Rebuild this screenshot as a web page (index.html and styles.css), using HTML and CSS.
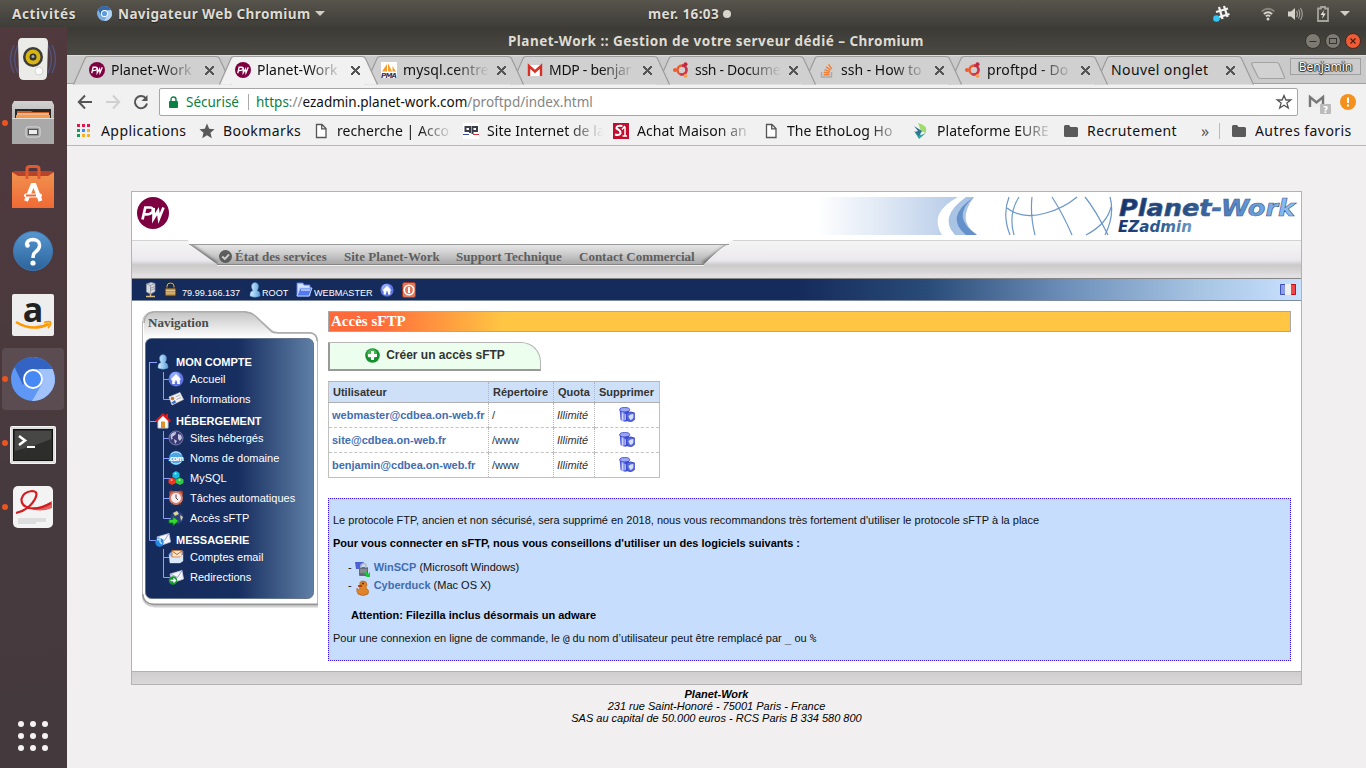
FILE: index.html
```html
<!DOCTYPE html>
<html lang="fr">
<head>
<meta charset="utf-8">
<title>Planet-Work :: Gestion de votre serveur dédié</title>
<link rel="stylesheet" href="styles.css">
</head>
<body>
<svg class="defs" width="0" height="0">
  <defs>
    <linearGradient id="gTitle" x1="0" x2="1"><stop offset="0" stop-color="#17326b"/><stop offset=".4" stop-color="#2d5487"/><stop offset=".7" stop-color="#5d92d2"/><stop offset="1" stop-color="#94c6fb"/></linearGradient>
    <linearGradient id="gEz" x1="0" x2="1"><stop offset="0" stop-color="#17326b"/><stop offset=".6" stop-color="#2f5f93"/><stop offset="1" stop-color="#6a9acb"/></linearGradient>
    <linearGradient id="gFade" x1="0" x2="1"><stop offset="0" stop-color="#fff"/><stop offset=".5" stop-color="#dde7f4"/><stop offset="1" stop-color="#b6cbe8"/></linearGradient>
    <linearGradient id="gNav" x1="0" x2="0" y1="0" y2="1"><stop offset="0" stop-color="#e9e9e9"/><stop offset=".45" stop-color="#cfcfcf"/><stop offset="1" stop-color="#aaa8a9"/></linearGradient>
    <linearGradient id="gMenu" x1="0" x2="1"><stop offset="0" stop-color="#152b5c"/><stop offset=".55" stop-color="#172e60"/><stop offset="1" stop-color="#5f7fa6"/></linearGradient>
    <linearGradient id="gFolder" x1="0" x2="0" y1="0" y2="1"><stop offset="0" stop-color="#c6c6c6"/><stop offset="1" stop-color="#fff"/></linearGradient>
    <linearGradient id="gUser" x1="0" x2="1"><stop offset="0" stop-color="#d9f1ff"/><stop offset="1" stop-color="#5c9fdc"/></linearGradient>
    <linearGradient id="gGrey" x1="0" x2="0" y1="0" y2="1"><stop offset="0" stop-color="#d2d2d2"/><stop offset="1" stop-color="#8d8d8d"/></linearGradient>
    <linearGradient id="gHelp" x1="0" x2="0" y1="0" y2="1"><stop offset="0" stop-color="#5797cf"/><stop offset="1" stop-color="#2c639c"/></linearGradient>
    <linearGradient id="gBag" x1="0" x2="0" y1="0" y2="1"><stop offset="0" stop-color="#f0924f"/><stop offset="1" stop-color="#ef6a35"/></linearGradient>
    <linearGradient id="gBlue" x1="0" x2="1"><stop offset="0" stop-color="#2a34c8"/><stop offset=".3" stop-color="#a6b4ff"/><stop offset=".6" stop-color="#4453e2"/><stop offset="1" stop-color="#2832b4"/></linearGradient>
    <filter id="soft" x="-20%" y="-20%" width="140%" height="140%"><feGaussianBlur stdDeviation="1.500"/></filter>
    <clipPath id="navclip"><path d="M57 4H597Q590 6 572 24H85Z"/></clipPath>
    <symbol id="pw" viewBox="0 0 32 32"><circle cx="16" cy="16" r="16" fill="#7d0041"/><path d="M5.500 22.500L8.300 10.500H13.500Q17 11 15.500 14.500Q14 17.700 8 17.300M16.700 11L16.500 21.500L21 14L22 21.500L26.500 10.500" fill="none" stroke="#fff" stroke-width="2.700"/></symbol>
    <symbol id="ubuntu" viewBox="0 0 16 16"><circle cx="9" cy="8" r="4.500" fill="none" stroke="#f1562a" stroke-width="2.400"/><path d="M9 3.500A4.500 4.500 0 0 1 13.500 8" fill="none" stroke="#c8304f" stroke-width="2.400"/><path d="M13.500 8A4.500 4.500 0 0 1 7 12" fill="none" stroke="#d5344a" stroke-width="2.400"/><circle cx="2" cy="8" r="2" fill="#f15b29"/><circle cx="12.500" cy="2.200" r="2" fill="#c9243d"/><circle cx="12.500" cy="14" r="2" fill="#f6a04d"/></symbol>
    <symbol id="stack" viewBox="0 0 16 16"><path d="M2.500 10V15H12.500V10" fill="none" stroke="#aaa" stroke-width="1.400"/><path d="M4.500 12.800H10.500M4.700 10.300L10.600 11M5.500 7.600L11 9.500M7 4.800L11.700 8M9.500 2.300L12.800 7" stroke="#f47f35" stroke-width="1.400"/></symbol>
    <symbol id="page" viewBox="0 0 16 16"><path d="M3.500 1.500H9L13 5.500V14.500H3.500ZM8.700 1.500V5.800H13" fill="#fff" stroke="#555" stroke-width="1.300"/></symbol>
    <symbol id="folder" viewBox="0 0 16 16"><path d="M1 3.500Q1 2 2.500 2H6L7.500 4H13.500Q15 4 15 5.500V12.500Q15 14 13.500 14H2.500Q1 14 1 12.500Z" fill="#5a5a5a"/></symbol>
    <symbol id="user" viewBox="0 0 16 16"><path d="M3 14Q2.500 9.500 6 8.500Q4 6 4.700 3Q5.500 .5 8 .5Q10.500 .5 11.300 3Q12 6 10 8.500Q13.500 9.500 13 14Q8 16.500 3 14Z" fill="url(#gUser)" stroke="#4b8fc9" stroke-width=".5"/></symbol>
    <symbol id="home" viewBox="0 0 16 16"><circle cx="8" cy="8" r="7.500" fill="#5f74e0"/><circle cx="7" cy="6" r="5" fill="#8fa8f7"/><path d="M2.700 8.500L8 3L13.300 8.500H11.800V13H9.200V9.500H6.800V13H4.200V8.500Z" fill="#fff"/></symbol>
    <symbol id="globe" viewBox="0 0 16 16"><circle cx="8" cy="8" r="7.300" fill="#3b3b74"/><circle cx="8" cy="8" r="7" fill="none" stroke="#7878a8"/><path d="M2.500 5Q5 1.500 8 2L7.500 4.500L4 7L5 9L3 9.500ZM10 4L13 5L14 8L12 11L10 9ZM6 9L9 11L7 14Z" fill="#c4c4e6"/></symbol>
    <symbol id="mail" viewBox="0 0 16 16"><path d="M2 5L14 1.500L15.500 10L4 14Z" fill="#f5f7ff" stroke="#c4c8e4" stroke-width=".8"/><path d="M2 5L9.500 8.500L14 1.500" fill="none" stroke="#9b9cc8" stroke-width="1"/></symbol>
    <symbol id="trash" viewBox="0 0 16 16"><path d="M.7 2.500L1.500 13Q5.500 16 10 13.500V2.500Z" fill="url(#gBlue)"/><ellipse cx="5.700" cy="2.700" rx="5" ry="2.200" fill="#98a8f5" stroke="#353fc0" stroke-width=".8"/><path d="M3.700 6.500V13M6.200 7V13" stroke="#d5dcff" stroke-width="1.100"/><path d="M7 6.500Q11 3.500 15.700 6V12.500Q12.500 16 8.500 14Z" fill="#5567de" stroke="#3844c4" stroke-width=".7"/><path d="M11.500 7.500L14.300 7V10.500Q13.500 12.500 11.500 13Q9.700 11 9.500 9Z" fill="#d6defc"/></symbol>
    <symbol id="go" viewBox="0 0 16 16"><path d="M1 9.500H5V6.500L10.500 11L5 15.500V13H1Z" fill="#35d931" stroke="#0d7d18" stroke-width=".9"/></symbol>
  </defs>
</svg>

<header class="topbar">
  <span class="activities">Activités</span>
  <svg class="ti" width="15" height="15" viewBox="0 0 44 44"><circle cx="22" cy="22" r="22" fill="#78aee4"/><path d="M3 11Q10 0 22 0Q36 1 41 12H22L12 26Z" fill="#3867a8"/><path d="M41 12Q50 30 33 41Q27 44 21 44L31 26L30 14Z" fill="#b1d2f4"/><circle cx="22" cy="22" r="9" fill="#5c9ae3" stroke="#fff" stroke-width="3"/></svg>
  <span class="appname">Navigateur Web Chromium</span>
  <svg class="caret" width="10" height="5"><path d="M0 0H10L5 5Z" fill="#d0cdc4"/></svg>
  <span class="clock">mer. 16:03</span><i class="cdot"></i>
  <div class="tray">
    <svg width="17" height="17" viewBox="0 0 17 17"><path d="M6 2L9.500 14M11 1L14.500 12M3 7L15 3.500M4.500 12.500L16.500 9" stroke="#f2f2f2" stroke-width="2.300"/><circle cx="3.500" cy="13.500" r="3.300" fill="#36c5f0"/></svg>
    <svg class="wifi" width="14" height="14" viewBox="0 0 14 14" fill="none" stroke="#d6d3cb" stroke-width="1.800"><path d="M.7 4.500Q7-1 13.300 4.500" stroke="#87847b"/><path d="M2.800 7Q7 3.500 11.200 7M4.800 9.300Q7 7.500 9.200 9.300"/><circle cx="7" cy="12" r="1.500" fill="#d6d3cb" stroke="none"/></svg>
    <svg class="vol" width="16" height="14" viewBox="0 0 16 14"><path d="M1 4.500H4L8 1V13L4 9.500H1Z" fill="#d6d3cb"/><path d="M9.500 4Q11.500 7 9.500 10M11.500 2.500Q14 7 11.500 11.500M13.500 1Q17 7 13.500 13" fill="none" stroke="#a9a69e" stroke-width="1.100"/></svg>
    <svg class="bat" width="12" height="16" viewBox="0 0 12 16"><path d="M4 1H8V2.500H11V15H1V2.500H4Z" fill="none" stroke="#a6a39b" stroke-width="1.800"/><path d="M7 4L3.500 9H6L5 13L8.800 7.600H6.300Z" fill="#e6e4de"/></svg>
    <svg class="caret2" width="10" height="5"><path d="M0 0H10L5 5Z" fill="#d0cdc4"/></svg>
  </div>
</header>

<div class="desk">
<aside class="dock">
  <div class="app"><svg width="48" height="44" viewBox="0 0 48 44"><path d="M5 8Q-2 22 5 36M9 8Q2 22 9 36M43 8Q50 22 43 36M39 8Q46 22 39 36" fill="none" stroke="#50537a" stroke-width="1.500"/><path d="M13 1H35Q39 1 39 6L38 38Q38 43 33 43H15Q10 43 10 38L9 6Q9 1 13 1Z" fill="#ebebe8"/><circle cx="24" cy="20" r="10" fill="#3c3c3a"/><circle cx="24" cy="20" r="7.500" fill="#d8b514"/><circle cx="24" cy="20" r="3.500" fill="#333"/><circle cx="24" cy="19.500" r="1.500" fill="#aaa"/><circle cx="30" cy="34" r="4" fill="#fafafa" stroke="#d3d3d0"/></svg></div>
  <div class="app run"><svg width="44" height="46" viewBox="0 0 44 46"><path d="M3 1H41L43 5V44H1V5Z" fill="url(#gGrey)"/><path d="M4 9H40V20H4Z" fill="#292725"/><path d="M6 11H20L22 12H38V20H6Z" fill="#cd5c22"/><path d="M5 15H39V20H5Z" fill="#f39a4c"/><path d="M6 14H38" stroke="#ffe4c3" stroke-width="1.300"/><path d="M1 18H43V44H1Z" fill="#aaa9a9"/><path d="M1 18.500H43" stroke="#ddd"/><rect x="15" y="27" width="14" height="10" rx="2" fill="#999" stroke="#ddd"/><rect x="17.500" y="29.500" width="9" height="5" fill="#eee" stroke="#555"/></svg></div>
  <div class="app"><svg width="44" height="44" viewBox="0 0 44 44"><path d="M1 7H43V43H1Z" fill="url(#gBag)"/><path d="M1 7L7 11H37L43 7L40 6H4Z" fill="#b5442a"/><path d="M16 14V4Q16 1.500 19 1.500H25Q28 1.500 28 4V14" fill="none" stroke="#e05a31" stroke-width="3"/><path d="M15 36L21.500 20H23.500L29.500 36" fill="none" stroke="#fff" stroke-width="4"/><rect x="13" y="28.500" width="18" height="4" rx="2" fill="#fff"/><rect x="15" y="29.500" width="10" height="2" fill="#ef6a35"/></svg></div>
  <div class="app"><svg width="42" height="42" viewBox="0 0 42 42"><circle cx="21" cy="21" r="19.500" fill="url(#gHelp)" stroke="#3e78b4"/><path d="M14.500 15Q15 9.500 21 9.500Q28 10 27.500 16Q27 19.500 24 21.500Q21 23.500 21 28" fill="none" stroke="#fff" stroke-width="3.500"/><circle cx="15.500" cy="15.500" r="2.300" fill="#fff"/><circle cx="21" cy="33" r="2.600" fill="#fff"/></svg></div>
  <div class="app"><svg width="42" height="42" viewBox="0 0 42 42"><rect width="42" height="42" rx="2" fill="#eee"/><text x="21" y="27.500" text-anchor="middle" class="amz">a</text><path d="M4 28Q20 38 37 30" fill="none" stroke="#ff9900" stroke-width="2.500"/><path d="M32 28.500Q37 27 38.500 28Q39 31 36 34" fill="none" stroke="#ff9900" stroke-width="1.800"/></svg></div>
  <div class="app run current"><svg width="44" height="44" viewBox="0 0 44 44"><circle cx="22" cy="22" r="22" fill="#5f97f6"/><path d="M3.500 10Q10 0 22 0Q36 1 41.500 12H22L12 28Z" fill="#3364c4"/><path d="M41.500 12Q49 30 33 41Q27 44.500 21 44L31.500 26Q33 18 27 12Z" fill="#a1c2fb"/><circle cx="22" cy="22" r="9" fill="#4688f4" stroke="#fff" stroke-width="2"/></svg></div>
  <div class="app run term"><svg width="46" height="38" viewBox="0 0 46 38"><rect x=".5" y=".5" width="45" height="37" rx="1" fill="#ddd" stroke="#f5f5f3"/><rect x="3.500" y="3.500" width="39" height="31" fill="#2d2e2c" stroke="#111"/><path d="M5 5H41V13Q25 20 5 25Z" fill="#474745"/><path d="M9 10L15 14.500L9 19" fill="none" stroke="#fff" stroke-width="2.600"/><path d="M17 21H25" stroke="#fff" stroke-width="2"/></svg></div>
  <div class="app run"><svg width="42" height="42" viewBox="0 0 42 42"><rect x="1" y="0" width="40" height="42" rx="5" fill="#f3f3f3"/><path d="M40 15V22Q27 27 17 22Q28 23 40 15Z" fill="#e2605f"/><path d="M4 27Q17 24 23 13Q27 5 20 5Q11 6 9.500 13Q9 20 17 22Q27 24 39 17" fill="none" stroke="#d31c20" stroke-width="2.200"/><path d="M6 33H34M6 35H34M6 37H24" stroke="#c7c7c7"/></svg></div>
  <div class="grid"><i></i><i></i><i></i><i></i><i></i><i></i><i></i><i></i><i></i></div>
</aside>

<main class="window">
  <div class="titlebar">
    <span class="wtitle">Planet-Work :: Gestion de votre serveur dédié – Chromium</span>
    <div class="wbtns">
      <svg width="16" height="16"><circle cx="8" cy="8" r="7.500" fill="#7c7a72" stroke="#34332e"/><path d="M4.500 8.500H11.500" stroke="#33322e"/></svg>
      <svg width="16" height="16"><circle cx="8" cy="8" r="7.500" fill="#7c7a72" stroke="#34332e"/><rect x="4.500" y="5.500" width="7" height="5" fill="none" stroke="#33322e"/></svg>
      <svg width="16" height="16"><circle cx="8" cy="8" r="7.500" fill="#ef5b34" stroke="#43281f"/><path d="M5.500 5.500L10.500 10.500M10.500 5.500L5.500 10.500" stroke="#4a2014" stroke-width="1.300"/></svg>
    </div>
  </div>

  <nav class="tabs">
    <div class="tab t1"><svg class="shape" width="160" height="29"><path d="M.5 28.500L12 2.500Q12.700 .5 15 .5H143Q145.500 .5 146.500 2.500L158.500 28.500"/></svg><svg class="fav" width="16" height="16"><use href="#pw"/></svg><span class="tt">Planet-Work</span><b class="x"></b></div>
    <div class="tab t2 on"><svg class="shape" width="160" height="29"><path d="M.5 28.500L12 2.500Q12.700 .5 15 .5H143Q145.500 .5 146.500 2.500L158.500 28.500"/></svg><svg class="fav" width="16" height="16"><use href="#pw"/></svg><span class="tt">Planet-Work</span><b class="x"></b></div>
    <div class="tab t3"><svg class="shape" width="160" height="29"><path d="M.5 28.500L12 2.500Q12.700 .5 15 .5H143Q145.500 .5 146.500 2.500L158.500 28.500"/></svg><svg class="fav" width="16" height="16"><rect width="16" height="16" fill="#fff"/><path d="M1 9.500L6 2V9.500ZM7 9.500V1L11 9.500ZM11.500 9.500V4L15 9.500Z" fill="#f89c2c"/><text x="0" y="16" class="pma" textLength="16">PMA</text></svg><span class="tt">mysql.centre</span><b class="x"></b></div>
    <div class="tab t4"><svg class="shape" width="160" height="29"><path d="M.5 28.500L12 2.500Q12.700 .5 15 .5H143Q145.500 .5 146.500 2.500L158.500 28.500"/></svg><svg class="fav" width="16" height="16"><rect x="1" y="3" width="14" height="11" fill="#fff"/><path d="M2 14V4L8 9.500L14 4V14" fill="none" stroke="#d93025" stroke-width="2.400"/></svg><span class="tt">MDP - benjar</span><b class="x"></b></div>
    <div class="tab t5"><svg class="shape" width="160" height="29"><path d="M.5 28.500L12 2.500Q12.700 .5 15 .5H143Q145.500 .5 146.500 2.500L158.500 28.500"/></svg><svg class="fav" width="16" height="16"><use href="#ubuntu"/></svg><span class="tt">ssh - Docume</span><b class="x"></b></div>
    <div class="tab t6"><svg class="shape" width="160" height="29"><path d="M.5 28.500L12 2.500Q12.700 .5 15 .5H143Q145.500 .5 146.500 2.500L158.500 28.500"/></svg><svg class="fav" width="16" height="16"><use href="#stack"/></svg><span class="tt">ssh - How to</span><b class="x"></b></div>
    <div class="tab t7"><svg class="shape" width="160" height="29"><path d="M.5 28.500L12 2.500Q12.700 .5 15 .5H143Q145.500 .5 146.500 2.500L158.500 28.500"/></svg><svg class="fav" width="16" height="16"><use href="#ubuntu"/></svg><span class="tt">proftpd - Do</span><b class="x"></b></div>
    <div class="tab t8 plain"><svg class="shape" width="160" height="29"><path d="M.5 28.500L12 2.500Q12.700 .5 15 .5H143Q145.500 .5 146.500 2.500L158.500 28.500"/></svg><span class="tt">Nouvel onglet</span><b class="x"></b></div>
    <svg class="newtab" width="36" height="18"><path d="M4 .5H26Q28 .5 29 2L34.500 15Q35 16.500 33 16.500H11Q9 16.500 8 15L1.500 2Q1.500 .5 4 .5Z" fill="#d2d2d2" stroke="#a3a3a3" stroke-width="1.200"/></svg>
    <span class="profile">Benjamin</span>
  </nav>

  <div class="toolbar">
    <svg width="16" height="16" fill="none" stroke="#555" stroke-width="2"><path d="M15 8H2.500M8 1.500L1.800 8L8 14.500"/></svg>
    <svg width="16" height="16" fill="none" stroke="#d0d0d0" stroke-width="2"><path d="M1 8H13.500M8 1.500L14.200 8L8 14.500"/></svg>
    <svg width="16" height="16" fill="none" stroke="#555" stroke-width="2"><path d="M13 4.500A6.100 6.100 0 1 0 14 9.500"/><path d="M14.500 1V7H8.500Z" fill="#555" stroke="none"/></svg>
    <div class="url">
      <svg width="9" height="12"><rect y="5" width="9" height="7" rx="1" fill="#0b8043"/><path d="M2 5V3.500Q2 1 4.500 1T7 3.500V5" fill="none" stroke="#0b8043" stroke-width="1.400"/></svg>
      <span class="secure">Sécurisé</span><i class="sep"></i>
      <span class="addr"><span class="g">https</span><span class="m">://</span>ezadmin.planet-work.com<span class="m">/proftpd/index.html</span></span>
      <svg class="star" width="16" height="16"><path d="M8 1.500L9.900 6H14.800L10.900 9.100L12.300 14L8 11.200L3.700 14L5.100 9.100L1.200 6H6.100Z" fill="none" stroke="#555" stroke-width="1.300"/></svg>
    </div>
    <svg class="gm" width="24" height="22"><rect x="1" y="3" width="15" height="11" fill="#eee"/><path d="M2 14V4L8.500 9.500L15 4V14" fill="none" stroke="#777" stroke-width="2.400"/><rect x="12" y="11" width="11" height="10" rx="1" fill="#bbb"/><text x="17.500" y="19.500" class="q" text-anchor="middle">?</text></svg>
    <svg class="warn" width="16" height="16"><circle cx="8" cy="8" r="8" fill="#f4911e"/><path d="M8 3.500V9M8 10.500V12.500" stroke="#fff" stroke-width="2"/></svg>
  </div>

  <div class="bookmarks">
    <div class="bm b1"><svg width="16" height="16"><path d="M1 1h3v3h-3zM6 1h3v3h-3zM11 1h3v3h-3z" fill="#e2184a"/><path d="M1 6h3v3h-3zM1 11h3v3h-3z" fill="#0f9d58"/><path d="M6 6h3v3h-3z" fill="#4285f4"/><path d="M11 6h3v3h-3zM6 11h3v3h-3zM11 11h3v3h-3z" fill="#f9b020"/></svg><span>Applications</span></div>
    <div class="bm b2"><svg width="16" height="16"><path d="M8 .5L10.200 5.700L15.600 6.200L11.500 9.800L12.800 15.200L8 12.300L3.200 15.200L4.500 9.800L.4 6.200L5.800 5.700Z" fill="#5a5a5a"/></svg><span>Bookmarks</span></div>
    <div class="bm b3 fade"><svg width="16" height="16"><use href="#page"/></svg><span>recherche | Acco</span></div>
    <div class="bm b4 fade"><svg width="16" height="16"><rect width="16" height="16" fill="#fff"/><path d="M7 10V4H2.500V8H7M9.500 11V4H14V8H9.500" fill="none" stroke="#3b3f4c" stroke-width="2"/><path d="M0 11.500H6" stroke="#33479c"/><path d="M10 11.500H16" stroke="#d22f3c"/></svg><span>Site Internet de la</span></div>
    <div class="bm b5 fade"><svg width="16" height="16"><rect width="16" height="16" fill="#c10d2e"/><path d="M9.500 3Q3 2 3.500 5.500Q8 7.500 7.500 10.500Q6 13 2 11.500" fill="none" stroke="#fff" stroke-width="2"/><path d="M12 3L9 6.500M12 4V13M9.500 13H14" fill="none" stroke="#fff" stroke-width="1.500"/></svg><span>Achat Maison an</span></div>
    <div class="bm b6 fade"><svg width="16" height="16"><use href="#page"/></svg><span>The EthoLog Ho</span></div>
    <div class="bm b7 fade"><svg width="16" height="16"><path d="M5 0Q15 2 13 10L8 8Z" fill="#9fdc6c"/><path d="M1 8L8 12L13 10L6 16Z" fill="#2ba8a0"/><path d="M1 3L9 8L6 13L2 9L5 8Z" fill="#317393"/></svg><span>Plateforme EURE</span></div>
    <div class="bm b8"><svg width="16" height="16"><use href="#folder"/></svg><span>Recrutement</span></div>
    <span class="more">»</span><i class="bsep"></i>
    <div class="bm b9"><svg width="16" height="16"><use href="#folder"/></svg><span>Autres favoris</span></div>
  </div>

  <div class="viewport">
    <div class="site">
      <div class="brand">
        <svg class="logo" width="32" height="32"><use href="#pw"/></svg>
        <svg class="banner" width="480" height="40">
          <path d="M0 0H142Q112 16 126 38H0Z" fill="url(#gFade)"/>
          <path d="M158 0H150Q122 20 139 38H161Q140 24 158 0Z" fill="#a9c3e4"/>
          <path d="M158 0Q128 20 150 38H161Q134 20 158 0Z" fill="#6591ca"/>
          <g fill="none" stroke="#6c97cb" stroke-width="1.200"><path d="M193 0Q186 18 194 38M203 0Q192 17 198 38M216 0Q214 18 219 38M191 11Q206 23 230 16Q248 11 261 0M236 0Q247 17 256 38M269 0Q279 12 292 38M270 38Q291 27 295 10M294 0Q299 18 289 38"/></g>
          <text x="303" y="19" class="pwt" textLength="176" lengthAdjust="spacingAndGlyphs">Planet-Work</text>
          <text x="302" y="35" class="ezt" textLength="74" lengthAdjust="spacingAndGlyphs">EZadmin</text>
        </svg>
      </div>
      <div class="sitenav">
        <svg class="navbg" width="610" height="38"><path d="M56 0H602Q596 2 592 4.500H58Z" fill="#fff"/><path d="M57 4H597Q590 6 572 24H85Z" fill="url(#gNav)"/><g clip-path="url(#navclip)" filter="url(#soft)" opacity=".8"><path d="M54 4L84 25" stroke="#555" stroke-width="6"/><path d="M600 4L572 25" stroke="#555" stroke-width="6"/></g><path d="M57 4.500H597" stroke="#9a9a9a"/><path d="M85 24.500H572" stroke="#858585"/><path d="M85 25.500H572" stroke="#f0f0f0"/></svg>
        <svg class="ok" width="13" height="13"><circle cx="6.500" cy="6.500" r="6.500" fill="#5c5c5c"/><path d="M3.200 6.500L5.800 9L10 4.500" fill="none" stroke="#ccc" stroke-width="1.900"/></svg>
        <a class="n1">État des services</a><a class="n2">Site Planet-Work</a><a class="n3">Support Technique</a><a>Contact Commercial</a>
      </div>
      <div class="blue">
        <svg width="14" height="16"><path d="M3.500 2L8 .5L12 1.500V9.500L7.500 12L3.500 10Z" fill="#d9dbe2" stroke="#9a9ca6" stroke-width=".7"/><path d="M3.500 2L7.500 3.500V12M7.500 3.500L12 1.500M8 6L12 4.500M8 8L12 6.500" fill="none" stroke="#8d8f99" stroke-width=".8"/><path d="M7.500 12V14.500M3 14.500H12" stroke="#dcba80" stroke-width="1.500"/></svg>
        <svg class="lock" width="13" height="15"><path d="M3 7V4Q3 1 6.500 1T10 4V7" fill="none" stroke="#222" stroke-width="2.600"/><path d="M3 7V4Q3 1 6.500 1T10 4V7" fill="none" stroke="#bbb" stroke-width="1"/><rect x="1" y="6" width="11" height="8" rx="1" fill="#bd9457" stroke="#3b2a12"/><path d="M2 8.500H11M2 11H11" stroke="#e2c58d"/></svg>
        <span class="ip">79.99.166.137</span>
        <svg width="12" height="16" viewBox="2 0 12 16"><use href="#user" width="16" height="16"/></svg><span class="cap root">ROOT</span>
        <svg width="16" height="16"><path d="M1 1H7L8 3H14V14H1Z" fill="#d3e3ff" stroke="#5c7ad8"/><path d="M4 6H16L13 14H1Z" fill="#517af0" stroke="#b8d1ff"/><path d="M5 8H14" stroke="#fff"/></svg><span class="cap web">WEBMASTER</span>
        <svg class="h" width="14" height="16" viewBox="0 0 16 16"><use href="#home"/></svg>
        <svg width="14" height="16"><rect x=".5" y=".5" width="13" height="15" rx="2" fill="#e0795d" stroke="#a33822"/><circle cx="7" cy="8" r="4.700" fill="none" stroke="#fff" stroke-width="1.600"/><path d="M7 5V11" stroke="#fff" stroke-width="2"/></svg>
        <svg class="fr" width="16" height="11"><rect width="16" height="11" fill="#eee"/><rect width="5" height="11" fill="#8b9ee4"/><rect x="11" width="5" height="11" fill="#f04848"/><path d="M.5 10.500V.5H5" fill="none" stroke="#4054b8"/><path d="M.5 10.500H5" stroke="#4054b8"/><path d="M11 .5H15.500V10.500H11" fill="none" stroke="#c81017"/></svg>
      </div>

      <div class="body">
        <aside class="menu">
          <svg class="menubg" width="176" height="300">
            <path d="M1.500 285Q2 294.500 13 295H176" fill="none" stroke="#d0d0d0" stroke-width="3"/>
            <path d="M.5 12Q1 1 12 .5H103Q110 1 114 5L128 18Q131 21.500 136 21.500H168Q175.500 22 175.500 30V293H11Q1 293 .5 283Z" fill="#fff" stroke="#bbb"/>
            <path d="M.7 283Q1.500 293 12 293.500H176" fill="none" stroke="#969696" stroke-width="1.500"/>
            <path d="M2 27V12Q2.500 2 12 1.500H103Q109 2 113 6L130 22V27Z" fill="url(#gFolder)"/>
            <path d="M2 12Q2.500 1.500 12 1H103Q109 1.500 113 5L129 20Q131 22 136 22H168Q175 22.500 175 30" fill="none" stroke="#a9a9a9" stroke-width="1.500"/>
            <rect x="3.500" y="27.500" width="168" height="260" rx="6" fill="url(#gMenu)" stroke="#65758f"/>
            <path d="M7.500 51V229.500M7.500 51.500H15M7.500 110.500H15M7.500 229.500H15M21.500 61V88.500H29M21.500 68.500H29M21.500 120V207.500H29M21.500 127.500H29M21.500 147.500H29M21.500 167.500H29M21.500 187.500H29M21.500 238V266.500H29M21.500 246.500H29" fill="none" stroke="#8d9ffa"/>
          </svg>
          <h2>Navigation</h2>
          <div class="tree">
            <p class="hd"><svg width="16" height="16"><use href="#user"/></svg>MON COMPTE</p>
            <p><svg width="16" height="16"><use href="#home"/></svg>Accueil</p>
            <p><svg width="16" height="16"><path d="M1 6L12 1.500L15.500 8.500L4 14Z" fill="#f5f2f0" stroke="#c5c5cf" stroke-width=".7"/><circle cx="4.500" cy="7.500" r="1.800" fill="#c8752f"/><path d="M3.500 11.500L7 9L8 11.500L5 13Z" fill="#356bbc"/><path d="M7.500 6L12 4M8.500 8.500L13 6.500" stroke="#a3aac4"/></svg>Informations</p>
            <p class="hd"><svg width="16" height="16"><path d="M3 7V15H13V7L8 2Z" fill="#fff" stroke="#c9ccd6"/><path d="M6 15V8.500H10V15Z" fill="#e19028"/><path d="M.8 8.500L8 1.500L15.200 8.500M12 1V5" fill="none" stroke="#e21919" stroke-width="2"/></svg>HÉBERGEMENT</p>
            <p><svg width="16" height="16"><use href="#globe"/></svg>Sites hébergés</p>
            <p><svg width="16" height="16"><circle cx="8" cy="8" r="7" fill="#4fa4e4"/><path d="M3 4Q8 0 13 4M3 12Q8 16 13 12" fill="none" stroke="#c7eaff"/><text x="0" y="10.500" class="com" textLength="16">.com</text></svg>Noms de domaine</p>
            <p><svg width="16" height="16"><path d="M4.500 3L8 1L11.500 3V7L8 9L4.500 7Z" fill="#18bade"/><path d="M.5 9.500L4 7.500L8 9.500V13L4 15L.5 13Z" fill="#f0361c"/><path d="M8 9.500L12 7.500L15.500 9.500V13L12 15L8 13Z" fill="#31c747"/><circle cx="3.500" cy="10" r="1" fill="#ffb3a0"/><circle cx="11.500" cy="10" r="1" fill="#b6ffc0"/><circle cx="7.500" cy="3.500" r="1" fill="#b6f3ff"/></svg>MySQL</p>
            <p><svg width="16" height="16"><circle cx="3.500" cy="3" r="2.500" fill="#b0442d"/><circle cx="12.500" cy="3" r="2.500" fill="#b0442d"/><circle cx="8" cy="8" r="6" fill="#f6eeee" stroke="#d67c68" stroke-width="2"/><path d="M8 4.500V8L10 10M3 15L4.500 13M13 15L11.500 13" fill="none" stroke="#52454b"/></svg>Tâches automatiques</p>
            <p><svg width="16" height="16"><circle cx="9" cy="7.500" r="6.500" fill="#2d3f7c"/><path d="M5 3L9 1L11 4L7 6ZM12 5L15 7L13 11Z" fill="#d9d69a"/><use href="#go"/></svg>Accès sFTP</p>
            <p class="hd"><svg width="16" height="16"><use href="#mail"/><circle cx="4.500" cy="10.500" r="4.200" fill="#2787de"/><path d="M2 8L5 7L5 10L7 12" fill="none" stroke="#afe0ff" stroke-width="1.500"/></svg>MESSAGERIE</p>
            <p><svg width="16" height="16"><path d="M1 5L4 2H15V12L12 14H2Z" fill="#91b8e8" stroke="#5072b4"/><path d="M4 1.500H14V8H4Z" fill="#fae6cb" stroke="#c8753c" stroke-width=".8"/><path d="M4 2L9 5.500L14 2" fill="none" stroke="#bb6934"/><path d="M1 5.500L4 8.500H12L15 5.500V12L12 14H2Z" fill="#dbe8fb"/></svg>Comptes email</p>
            <p><svg width="16" height="16"><use href="#mail"/><circle cx="5" cy="11.500" r="4.300" fill="#13972e"/><path d="M2.500 11.500H7M5.500 9.500L7.500 11.500L5.500 13.500" fill="none" stroke="#fff" stroke-width="1.400"/></svg>Redirections</p>
          </div>
        </aside>

        <section class="content">
          <h1>Accès sFTP</h1>
          <a class="create"><svg width="15" height="15"><circle cx="7.500" cy="7.500" r="7.300" fill="#168f2d"/><circle cx="7" cy="6" r="5" fill="#43b34e"/><path d="M7.500 3V12M3 7.500H12" stroke="#fff" stroke-width="3"/></svg>Créer un accès sFTP</a>
          <table>
            <tr><th>Utilisateur</th><th>Répertoire</th><th>Quota</th><th>Supprimer</th></tr>
            <tr><td class="u">webmaster@cdbea.on-web.fr</td><td>/</td><td><em>Illimité</em></td><td class="del"><svg width="16" height="16"><use href="#trash"/></svg></td></tr>
            <tr><td class="u">site@cdbea.on-web.fr</td><td>/www</td><td><em>Illimité</em></td><td class="del"><svg width="16" height="16"><use href="#trash"/></svg></td></tr>
            <tr><td class="u">benjamin@cdbea.on-web.fr</td><td>/www</td><td><em>Illimité</em></td><td class="del"><svg width="16" height="16"><use href="#trash"/></svg></td></tr>
          </table>
          <div class="info">
            <p>Le protocole FTP, ancien et non sécurisé, sera supprimé en 2018, nous vous recommandons très fortement d'utiliser le protocole sFTP à la place</p>
            <p class="bold lead">Pour vous connecter en sFTP, nous vous conseillons d'utiliser un des logiciels suivants :</p>
            <div class="soft"><span>-</span><svg width="16" height="16"><path d="M0 0H9L4 7H1Z" fill="#4c61d4"/><rect x="4" y="5" width="9" height="9" rx="1" fill="#646a75"/><path d="M6 6V3Q9 0 11 3V6" fill="none" stroke="#b8b8b8" stroke-width="1.500"/><path d="M5 8H12M5 10H12" stroke="#aaa"/><path d="M9 11L11 9L13 12L15 10V15H10L12 14Z" fill="#19c638"/></svg><b>WinSCP</b> (Microsoft Windows)</div>
            <div class="soft"><span>-</span><svg width="16" height="16"><path d="M2 8Q3 11 5 9Q4 7 5 5Q4 1 8 1Q12 1 12 5Q11 7 11 8Q15 10 13 14Q8 17 3 14Q1 11 2 8Z" fill="#df8428" stroke="#a45816" stroke-width=".6"/><path d="M3 6H7" stroke="#a93814" stroke-width="1.800"/><circle cx="8" cy="3.500" r=".9" fill="#392310"/></svg><b>Cyberduck</b> (Mac OS X)</div>
            <p class="bold attention">Attention: Filezilla inclus désormais un adware</p>
            <p class="cmd">Pour une connexion en ligne de commande, le <code>@</code> du nom d’utilisateur peut être remplacé par <code>_</code> ou <code>%</code></p>
          </div>
        </section>
      </div>
      <div class="strip"></div>
    </div>
    <footer><b>Planet-Work</b><br>231 rue Saint-Honoré - 75001 Paris - France<br>SAS au capital de 50.000 euros - RCS Paris B 334 580 800</footer>
  </div>
</main>
</div>
</body>
</html>
```
FILE: styles.css
```css
* { box-sizing: border-box; }
body { margin: 0; width: 1366px; height: 768px; overflow: hidden; background: #f2f1f0; font-family: "Noto Sans", "Open Sans", sans-serif; font-size: 14px; }
svg { display: block; flex: none; overflow: visible; }
.defs { position: absolute; }
h1, h2, p { margin: 0; }

.topbar { height: 27px; display: flex; align-items: center; padding-left: 12px; background: linear-gradient(#57544c, #3e3d38); color: #dfdbd2; font-weight: bold; font-size: 13.5px; line-height: 26px; white-space: nowrap; letter-spacing: .4px; text-shadow: 0 1px 1px #222; }
.activities { width: 85px; letter-spacing: .6px; }
.appname { margin-left: 6px; width: 192px; }
.caret { margin-left: 5px; }
.clock { margin-left: 323px; width: 71px; }
.cdot { width: 8px; height: 8px; margin-left: 4px; border-radius: 50%; background: #d8d5cc; }
.tray { margin-left: auto; display: flex; align-items: center; padding-right: 16px; }
.wifi { margin-left: 31px; }
.vol { margin-left: 12px; }
.bat { margin-left: 14px; }
.caret2 { margin-left: 11px; }

.desk { display: flex; height: 741px; }
.dock { width: 67px; display: flex; flex-direction: column; padding: 1px 0 0 2px; background: linear-gradient(170deg, #51393d, #473a3e 60%, #44393d); }
.app { position: relative; width: 62px; height: 62px; margin-bottom: 2px; display: flex; align-items: center; justify-content: center; border-radius: 4px; flex: none; }
.run::before { content: ""; position: absolute; left: 0; top: 28px; width: 6px; height: 6px; border-radius: 50%; background: #e95420; }
.current { background: #5b4c51; }
.term { padding-top: 4px; }
.amz { font: bold 34px "Open Sans", sans-serif; fill: #222; }
.grid { display: grid; grid-template-columns: repeat(3, 6px); gap: 6px; margin-top: auto; margin-bottom: 17px; margin-left: 16px; }
.grid i { width: 6px; height: 6px; border-radius: 50%; background: #f4f3f2; }

.window { flex: 1; min-width: 0; display: flex; flex-direction: column; }
.titlebar { height: 28px; display: flex; align-items: center; background: linear-gradient(#3b3a36, #4b4943); color: #dfdbd2; font-weight: bold; font-size: 13.5px; line-height: 27px; letter-spacing: .48px; }
.wtitle { margin-left: 441px; width: 418px; white-space: nowrap; }
.wbtns { margin-left: auto; display: flex; gap: 4px; padding-right: 5px; }

.tabs { height: 29px; display: flex; padding-left: 6px; background: #cacaca; border-top: 1px solid #ddd; border-bottom: 1px solid #a0a0a0; }
.tab { position: relative; width: 158px; height: 28px; margin-right: -12px; display: flex; align-items: center; padding-left: 16px; flex: none; }
.shape { position: absolute; left: 0; top: 0; }
.shape path { fill: #d0d0d0; stroke: #9c9c9c; stroke-width: 1.2; }
.on .shape path { fill: #f2f1f2; }
.t1 { z-index: 8; } .t2 { z-index: 9; } .t3 { z-index: 7; } .t4 { z-index: 6; } .t5 { z-index: 5; } .t6 { z-index: 4; } .t7 { z-index: 3; } .t8 { z-index: 2; }
.fav { position: relative; }
.pma { font: bold italic 7px "DejaVu Sans"; fill: #33335f; }
.tt { position: relative; margin-left: 6px; width: 86px; overflow: hidden; white-space: nowrap; color: #111; line-height: 26px; -webkit-mask-image: linear-gradient(90deg, #000 60%, transparent); mask-image: linear-gradient(90deg, #000 60%, transparent); }
.t4 .tt, .t5 .tt { letter-spacing: -.3px; }
.t3 .tt, .t7 .tt { letter-spacing: .1px; }
.plain .tt { margin-left: 0; width: 107px; letter-spacing: .4px; -webkit-mask-image: none; mask-image: none; }
.x { position: relative; width: 9px; height: 9px; margin-left: 8px; background: linear-gradient(45deg, transparent 44%, #555 44%, #555 56%, transparent 56%), linear-gradient(-45deg, transparent 44%, #555 44%, #555 56%, transparent 56%); }
.newtab { margin: 6px 0 0 9px; }
.profile { margin: 2px 0 0 4px; width: 71px; height: 17px; border: 1px solid #a0a0a0; background: #ccc; color: #fff; font-size: 12px; line-height: 15px; text-align: center; text-shadow: 0 0 1px #000, 1px 0 1px #333, -1px 0 1px #333, 0 1px 1px #333; }

.toolbar { height: 34px; display: flex; align-items: center; gap: 12px; padding: 2px 9px 0 10px; background: #f2f1f2; }
.url { width: 1139px; height: 28px; margin-left: -2px; display: flex; align-items: center; border: 1px solid #a6a6a6; border-radius: 2px; background: #fff; padding: 0 5px 0 9px; white-space: nowrap; }
.secure { margin-left: 8px; width: 54px; color: #0b8043; font-size: 13.5px; }
.sep { width: 1px; height: 16px; margin: 0 7px 0 8px; background: #aaa; }
.addr { width: 337px; font-size: 13.5px; color: #111; }
.g { color: #0b8043; }
.m { color: #858585; }
.star { margin-left: auto; }
.gm { margin-left: -2px; margin-top: 4px; }
.q { font: bold 9px "DejaVu Sans"; fill: #fff; }
.warn { margin-left: -4px; }

.bookmarks { height: 28px; display: flex; align-items: center; padding-left: 9px; padding-bottom: 2px; background: #f2f1f2; border-bottom: 1px solid #bcb6b9; color: #111; }
.bm { display: flex; align-items: center; height: 25px; flex: none; white-space: nowrap; overflow: hidden; }
.bm span { margin-left: 9px; line-height: 25px; letter-spacing: .42px; }
.b1 { width: 123px; } .b2 { width: 114px; }
.b2 span, .b3 span, .b4 span, .b5 span, .b6 span, .b7 span, .b8 span, .b9 span { margin-left: 8px; }
.b3, .b4, .b5, .b6, .b7 { width: 150px; }
.bm.fade span { width: 116px; overflow: hidden; letter-spacing: .05px; -webkit-mask-image: linear-gradient(90deg, #000 70%, transparent); mask-image: linear-gradient(90deg, #000 70%, transparent); }
.b8 { width: 138px; }
.more { width: 18px; color: #555; font-size: 16px; line-height: 24px; }
.bsep { width: 1px; height: 16px; background: #bbb; margin-right: 11px; }

.viewport { flex: 1; background: #f1eff0; padding: 45px 64px 0; font-family: "Liberation Sans", Arial, sans-serif; font-size: 11px; color: #111; }
.site { width: 1171px; height: 494px; border: 1px solid #b3b3b3; background: #fff; display: flex; flex-direction: column; }
.brand { height: 48px; display: flex; justify-content: space-between; padding: 5px 5px 0; }
.pwt { font: italic bold 23px "DejaVu Sans", Verdana, sans-serif; fill: url(#gTitle); stroke: #3a5d8d; stroke-width: .6; }
.ezt { font: italic bold 15.500px "DejaVu Sans", Verdana, sans-serif; fill: url(#gEz); }
.sitenav { position: relative; height: 39px; display: flex; align-items: center; padding-left: 87px; background: linear-gradient(#f5f4f5, #eeecef 40%, #eae8ec 52%, #cbcac9 65%, #d9d6d8 85%, #e1dfe1 92%); border-top: 1px solid #d3d3d3; border-bottom: 1px solid #868686; font: bold 13px "Liberation Serif", serif; color: #5e5e5e; line-height: 30px; padding-bottom: 5px; white-space: nowrap; }
.navbg { position: absolute; left: 0; top: -1px; }
.sitenav .ok, .sitenav a { position: relative; }
.sitenav .ok { top: -1px; }
.n1 { margin-left: 3px; width: 109px; }
.n2 { width: 112px; }
.n3 { width: 123px; }
.blue { height: 22px; display: flex; align-items: center; padding: 0 5px 0 11px; background: linear-gradient(90deg, #152b5c 57%, #294b77 68%, #6d8fb9 80%, #a6c3e2 91%, #c8e1ff); border-bottom: 1px solid #7e8b9e; color: #fff; }
.lock { margin-left: 7px; }
.ip { margin: 6px 0 0 5px; width: 67px; line-height: 14px; font-size: 9.100px; }
.cap { margin-top: 6px; line-height: 14px; font-size: 9.100px; }
.root { margin-left: 1px; width: 34px; }
.web { margin-left: 2px; width: 66px; }
.blue .h { margin-right: 8px; }
.fr { margin-left: auto; }

.body { flex: 1; display: flex; padding: 10px 10px 0; min-height: 0; }
.menu { position: relative; width: 176px; height: 298px; margin-right: 10px; }
.menubg { position: absolute; left: 0; top: 0; overflow: hidden; }
.menu h2 { position: relative; height: 39px; padding: 4px 0 0 6px; font: bold 13px/16px "Liberation Serif", serif; color: #4b4b4b; }
.tree { position: relative; color: #fff; }
.tree p { height: 20px; display: flex; align-items: center; gap: 6px; padding-left: 26px; }
.tree .hd { height: 19px; padding: 5px 0 0 13px; gap: 5px; font-weight: bold; }

.content { width: 963px; }
h1 { height: 21px; border: 1px solid #a8a8a8; padding-left: 2px; background: linear-gradient(90deg, #ff6a3b 5%, #ffc543 18%); color: #fff; font: bold 15px/19px "Liberation Serif", serif; }
.create { margin-top: 10px; width: 213px; height: 29px; display: flex; align-items: center; justify-content: center; gap: 6px; background: #ecffef; border: 1px solid #b5b5b5; border-left: 2px solid #999; border-bottom: 2px solid #999; border-top-right-radius: 20px; font-weight: bold; font-size: 12px; color: #333; padding-bottom: 2px; }
table { margin-top: 10px; width: 332px; table-layout: fixed; border-collapse: collapse; border: 1px solid #c0c0c0; color: #333; }
th, td { height: 25px; padding: 0 3px; text-align: left; font-size: 11px; border-top: 1px dashed #c3c3c3; border-right: 1px dotted #b5b5b5; white-space: nowrap; }
th { height: 21px; padding-left: 4px; background: #cee0f8; border-bottom: 1px solid #b0b0b0; border-top: 1px solid #b5b5b5; }
th:nth-child(1) { width: 160px; } th:nth-child(2) { width: 65px; } th:nth-child(3) { width: 41px; }
.u { font-weight: bold; color: #426cb2; }
.del svg { margin: -1px 0 0 21px; }
.info { margin-top: 20px; height: 163px; border: 1px dotted #3312f4; background: #c6ddfd; padding: 15px 4px 0; line-height: 13px; color: #111; }
.info p { margin-bottom: 10px; }
.info .lead { margin-bottom: 9px; }
.bold { font-weight: bold; color: #000; }
.soft { display: flex; height: 18px; padding-left: 15px; white-space: pre; align-items: flex-start; line-height: 16px; }
.soft svg { margin: 3px 3px 0 3px; }
.soft b { color: #426cb2; }
.info .attention { padding: 14px 0 0 18px; }
.info code { font-family: "DejaVu Sans Mono", monospace; font-size: 11px; line-height: 11px; }
.strip { height: 13px; border-top: 1px solid #adb2ae; background: linear-gradient(#d0cecf, #dbd8da); }
footer { padding-top: 3px; text-align: center; font-style: italic; line-height: 12px; color: #000; }
.com { font: bold 7px "DejaVu Sans"; fill: #fff; }
```
